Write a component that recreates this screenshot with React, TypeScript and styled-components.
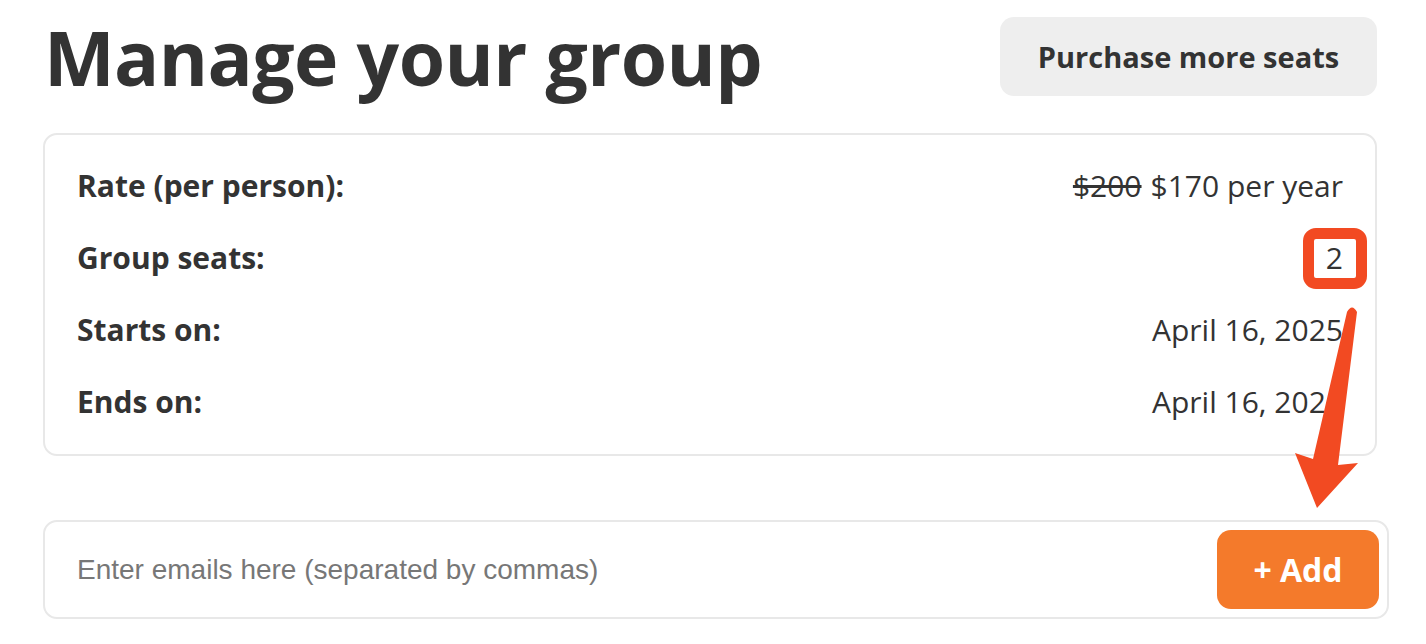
import * as React from 'react';
import styled, { createGlobalStyle } from 'styled-components';

const GlobalStyle = createGlobalStyle`
    body {
        margin: 0;
        background: #fff;
        font-family: "Open Sans", "Noto Sans", sans-serif;
        color: #333;
    }
`;

const Page = styled.div`
    width: 1426px;
    height: 644px;
    padding: 0 37px 0 43px;
    box-sizing: border-box;
    position: relative;
    overflow: hidden;
`;

const Header = styled.div`
    display: flex;
    justify-content: space-between;
    align-items: flex-start;
    height: 133px;
    padding-right: 12px;
`;

const Title = styled.h1`
    margin: 12px 0 0 1px;
    font-size: 75px;
    font-weight: 700;
    line-height: 1.2;
    letter-spacing: -0.6px;
    color: #333;
`;

const SecondaryButton = styled.button`
    margin-top: 17px;
    width: 377px;
    height: 79px;
    border: none;
    border-radius: 14px;
    background: #eeeeee;
    color: #333;
    font-family: inherit;
    font-size: 29px;
    font-weight: 700;
    cursor: pointer;
`;

const InfoCard = styled.div`
    margin-right: 12px;
    border: 2px solid #e8e8e8;
    border-radius: 14px;
    padding: 14px 32px 17px 32px;
    display: flex;
    flex-direction: column;
`;

const Row = styled.div`
    display: flex;
    justify-content: space-between;
    align-items: center;
    height: 72px;
    font-size: 30px;
`;

const Label = styled.span`
    font-weight: 700;
`;

const Value = styled.span`
    font-weight: 400;
`;

const OldPrice = styled.s`
    margin-right: 9px;
`;

const EmailBar = styled.div`
    margin-top: 64px;
    height: 99px;
    box-sizing: border-box;
    border: 2px solid #e8e8e8;
    border-radius: 14px;
    display: flex;
    align-items: center;
    padding: 0 8px 0 32px;
`;

const EmailInput = styled.input`
    flex: 1;
    padding: 0;
    border: none;
    outline: none;
    font-family: "Liberation Sans", Arial, sans-serif;
    font-size: 28px;
    color: #333;
    background: transparent;

    &::placeholder {
        color: #777;
    }
`;

const AddButton = styled.button`
    width: 162px;
    height: 79px;
    border: none;
    border-radius: 14px;
    background: #f47a2b;
    color: #fff;
    font-family: inherit;
    font-size: 32px;
    font-weight: 700;
    cursor: pointer;
`;

const Highlight = styled.div`
    position: absolute;
    left: 1303px;
    top: 228px;
    width: 64px;
    height: 61px;
    box-sizing: border-box;
    border: 11px solid #f24a22;
    border-radius: 13px;
`;

const ArrowOverlay = styled.svg`
    position: absolute;
    left: 1280px;
    top: 300px;
    pointer-events: none;
`;

const rows = [
    { label: 'Rate (per person):', value: null },
    { label: 'Group seats:', value: '2' },
    { label: 'Starts on:', value: 'April 16, 2025' },
    { label: 'Ends on:', value: 'April 16, 2026' },
];

const App: React.FC = () => {
    return (
        <Page>
            <GlobalStyle />
            <Header>
                <Title>Manage your group</Title>
                <SecondaryButton>Purchase more seats</SecondaryButton>
            </Header>
            <InfoCard>
                {rows.map((r) => (
                    <Row key={r.label}>
                        <Label>{r.label}</Label>
                        <Value>
                            {r.value === null ? (
                                <>
                                    <OldPrice>$200</OldPrice>$170 per year
                                </>
                            ) : (
                                r.value
                            )}
                        </Value>
                    </Row>
                ))}
            </InfoCard>
            <EmailBar>
                <EmailInput placeholder="Enter emails here (separated by commas)" />
                <AddButton>+ Add</AddButton>
            </EmailBar>
            <Highlight />
            <ArrowOverlay width="100" height="220" viewBox="0 0 100 220">
                <path d="M67,12 Q72,3 77,12 L58,165 L78,163 L37,208 L15,153 L33,159 Z" fill="#f24a22" />
            </ArrowOverlay>
        </Page>
    );
};

export default App;
